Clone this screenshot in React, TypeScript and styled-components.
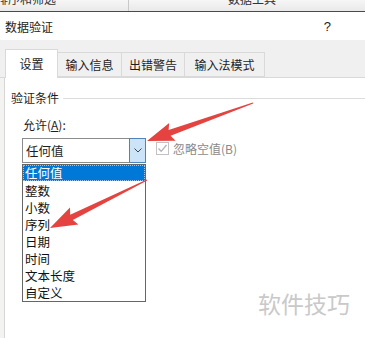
import styled, { createGlobalStyle } from "styled-components";

const GlobalStyle = createGlobalStyle`
    html, body {
        margin: 0;
        padding: 0;
        background: #fff;
    }
    body {
        font-family: "Noto Sans CJK SC", "Microsoft YaHei", sans-serif;
    }
`;

const TABS = [
    { label: "设置", width: 53 },
    { label: "输入信息", width: 64 },
    { label: "出错警告", width: 63 },
    { label: "输入法模式", width: 80 },
];

const OPTIONS = ["任何值", "整数", "小数", "序列", "日期", "时间", "文本长度", "自定义"];

// builds a tapering arrow polygon from tail to tip
function arrowPoints(tx: number, ty: number, hx: number, hy: number) {
    const headLen = 24;
    const headW = 19;
    const shaftW = 6;
    const tailW = 1;
    const dx = hx - tx;
    const dy = hy - ty;
    const len = Math.hypot(dx, dy);
    const ux = dx / len;
    const uy = dy / len;
    const nx = -uy;
    const ny = ux;
    const bx = hx - ux * headLen;
    const by = hy - uy * headLen;
    const barbX = bx - ux * 3;
    const barbY = by - uy * 3;
    const pts = [
        [tx + (nx * tailW) / 2, ty + (ny * tailW) / 2],
        [bx + (nx * shaftW) / 2, by + (ny * shaftW) / 2],
        [barbX + (nx * headW) / 2, barbY + (ny * headW) / 2],
        [hx, hy],
        [barbX - (nx * headW) / 2, barbY - (ny * headW) / 2],
        [bx - (nx * shaftW) / 2, by - (ny * shaftW) / 2],
        [tx - (nx * tailW) / 2, ty - (ny * tailW) / 2],
    ];
    return pts.map((p) => p.map((v) => v.toFixed(1)).join(",")).join(" ");
}

function App() {
    return (
        <Page>
            <GlobalStyle />
            <RibbonStrip>
                <RibbonGroup $width={132} $shift={-4} $align="left">
                    <RibbonLabel>排序和筛选</RibbonLabel>
                </RibbonGroup>
                <RibbonGroup $width={246} $shift={0} $align="center">
                    <RibbonLabel>数据工具</RibbonLabel>
                </RibbonGroup>
            </RibbonStrip>

            <TitleBar>
                <span>数据验证</span>
                <HelpMark>?</HelpMark>
            </TitleBar>

            <TabStrip>
                {TABS.map((tab, i) => (
                    <Tab key={tab.label} $active={i === 0} $width={tab.width}>
                        {tab.label}
                    </Tab>
                ))}
            </TabStrip>

            <Panel>
                <GroupHeader>
                    <span>验证条件</span>
                    <GroupLine />
                </GroupHeader>

                <FieldLabel>
                    允许(<u>A</u>):
                </FieldLabel>

                <FieldRow>
                    <Combo>
                        <ComboText>任何值</ComboText>
                        <ComboButton>
                            <svg width="8" height="5" viewBox="0 0 8 5">
                                <path d="M0.5 0.5 L4 4 L7.5 0.5" fill="none" stroke="#444" strokeWidth="1" />
                            </svg>
                        </ComboButton>
                    </Combo>
                    <CheckWrap>
                        <CheckBox>
                            <svg width="11" height="11" viewBox="0 0 11 11">
                                <path d="M1.5 5.5 L4.2 8.3 L9.5 2" fill="none" stroke="#b4b4b4" strokeWidth="1.3" />
                            </svg>
                        </CheckBox>
                        <CheckLabel>忽略空值(B)</CheckLabel>
                    </CheckWrap>
                </FieldRow>

                <OptionList>
                    {OPTIONS.map((opt, i) => (
                        <OptionItem key={opt} $selected={i === 0}>
                            {opt}
                        </OptionItem>
                    ))}
                </OptionList>
            </Panel>

            <Watermark>软件技巧</Watermark>

            <ArrowLayer width="365" height="338" viewBox="0 0 365 338">
                <polygon points={arrowPoints(253, 103, 147, 141)} fill="#e4433f" />
                <polygon points={arrowPoints(147, 180, 50, 228)} fill="#e4433f" />
            </ArrowLayer>
        </Page>
    );
}

const Page = styled.div`
    position: relative;
    width: 365px;
    height: 338px;
    overflow: hidden;
    display: flex;
    flex-direction: column;
    background: #f3f3f2;
    color: #1e1e1e;
    font-size: 12px;
`;

const RibbonStrip = styled.div`
    display: flex;
    height: 11px;
    flex-shrink: 0;
    overflow: hidden;
    background: linear-gradient(#f6f6f6, #e9e9e9);
    border-bottom: 1px solid #4a4a4a;
`;

const RibbonGroup = styled.div<{ $width: number; $shift: number; $align: string }>`
    width: ${(p) => p.$width}px;
    flex-shrink: 0;
    margin-left: ${(p) => p.$shift}px;
    border-right: 1px solid #c8c8c8;
    text-align: ${(p) => p.$align};
    overflow: hidden;
`;

const RibbonLabel = styled.span`
    display: block;
    margin-top: -8px;
    font-size: 12px;
    line-height: 14px;
    color: #333;
`;

const TitleBar = styled.div`
    height: 28px;
    flex-shrink: 0;
    display: flex;
    align-items: center;
    justify-content: space-between;
    padding: 0 34px 0 5px;
    background: #fff;
    font-size: 12px;
    color: #222;
`;

const HelpMark = styled.span`
    font-family: "Liberation Sans", Arial, sans-serif;
    font-size: 13px;
`;

const TabStrip = styled.div`
    height: 38px;
    flex-shrink: 0;
    box-sizing: border-box;
    display: flex;
    align-items: flex-end;
    padding-left: 5px;
    background: #f0f0f0;
    border-bottom: 1px solid #d9d9d9;
`;

const Tab = styled.div<{ $active: boolean; $width: number }>`
    width: ${(p) => p.$width}px;
    box-sizing: border-box;
    height: ${(p) => (p.$active ? 29 : 25)}px;
    margin-bottom: ${(p) => (p.$active ? -1 : 0)}px;
    display: flex;
    align-items: center;
    justify-content: center;
    padding-bottom: ${(p) => (p.$active ? 1 : 0)}px;
    background: ${(p) => (p.$active ? "#fff" : "#f0f0f0")};
    border: 1px solid #d9d9d9;
    border-bottom: ${(p) => (p.$active ? "none" : "1px solid #d9d9d9")};
    border-left: ${(p) => (p.$active ? "1px solid #d9d9d9" : "none")};
    font-size: 12px;
    color: #1e1e1e;
`;

const Panel = styled.div`
    flex: 1;
    margin-left: 4px;
    padding-left: 1px;
    background: #fff;
    border-left: 1px solid #d6d6d6;
    display: flex;
    flex-direction: column;
`;

const GroupHeader = styled.div`
    display: flex;
    align-items: center;
    margin-top: 13px;
    padding-left: 5px;
    line-height: 14px;
    font-size: 12px;
`;

const GroupLine = styled.div`
    flex: 1;
    margin-left: 4px;
    border-top: 1px solid #dcdcdc;
`;

const FieldLabel = styled.div`
    margin-top: 13px;
    padding-left: 17px;
    line-height: 14px;
    font-size: 12px;

    u {
        text-underline-offset: 1px;
    }
`;

const FieldRow = styled.div`
    display: flex;
    align-items: center;
    margin-top: 6px;
    padding-left: 16px;
`;

const Combo = styled.div`
    width: 124px;
    height: 25px;
    box-sizing: border-box;
    display: flex;
    border: 1px solid #8c8c8c;
    background: #fff;
`;

const ComboText = styled.div`
    flex: 1;
    display: flex;
    align-items: center;
    padding-left: 3px;
    font-size: 12.5px;
`;

const ComboButton = styled.div`
    width: 17px;
    margin: -1px -1px -1px 0;
    box-sizing: border-box;
    display: flex;
    align-items: center;
    justify-content: center;
    background: #cce4f7;
    border: 1px solid #4f84b8;
`;

const CheckWrap = styled.div`
    display: flex;
    align-items: center;
    margin-left: 10px;
    margin-top: -4px;
`;

const CheckBox = styled.div`
    width: 13px;
    height: 13px;
    box-sizing: border-box;
    display: flex;
    align-items: center;
    justify-content: center;
    border: 1px solid #c2c2c2;
`;

const CheckLabel = styled.span`
    margin-left: 4px;
    font-size: 12px;
    color: #8a8a8a;
`;

const OptionList = styled.div`
    width: 124px;
    margin: 1px 0 0 16px;
    box-sizing: border-box;
    border: 1px solid #666;
    background: #fff;
    display: flex;
    flex-direction: column;
`;

const OptionItem = styled.div<{ $selected: boolean }>`
    height: ${(p) => (p.$selected ? 16 : 17)}px;
    line-height: ${(p) => (p.$selected ? 16 : 17)}px;
    box-sizing: border-box;
    padding-left: 2px;
    margin-bottom: ${(p) => (p.$selected ? 1 : 0)}px;
    font-size: 12.5px;
    background: ${(p) => (p.$selected ? "#0078d7" : "#fff")};
    color: ${(p) => (p.$selected ? "#fff" : "#111")};
    outline: ${(p) => (p.$selected ? "1px dotted #9ac3ee" : "none")};
    outline-offset: -1px;
`;

const Watermark = styled.div`
    position: absolute;
    left: 258px;
    top: 288px;
    font-size: 23px;
    line-height: 30px;
    color: #c9c9c9;
`;

const ArrowLayer = styled.svg`
    position: absolute;
    left: 0;
    top: 0;
    pointer-events: none;
`;

export default App;
